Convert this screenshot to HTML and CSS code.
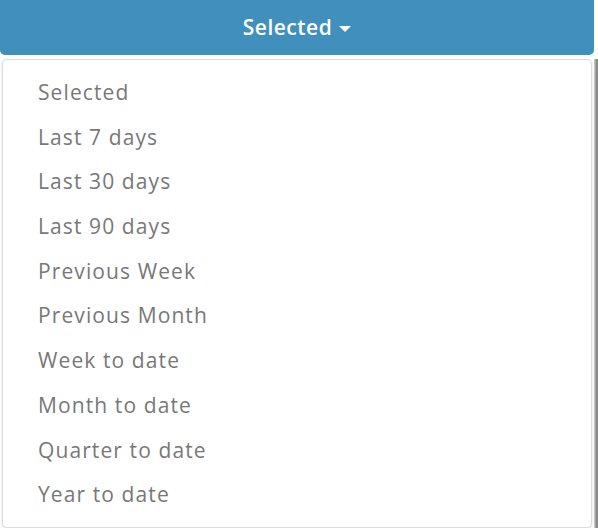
FILE: index.html
```html
<!DOCTYPE html>
<html>
<head>
<meta charset="utf-8">
<link rel="stylesheet" href="styles.css">
</head>
<body>
<div class="page">
  <div class="btn-row">
    <button class="toggle">Selected <span class="caret"></span></button>
  </div>
  <div class="menu-row">
    <ul class="menu">
      <li>Selected</li>
      <li>Last 7 days</li>
      <li>Last 30 days</li>
      <li>Last 90 days</li>
      <li>Previous Week</li>
      <li>Previous Month</li>
      <li>Week to date</li>
      <li>Month to date</li>
      <li>Quarter to date</li>
      <li>Year to date</li>
    </ul>
    <div class="edge"></div>
  </div>
</div>
</body>
</html>
```
FILE: styles.css
```css
html, body {
  margin: 0;
  padding: 0;
  background: #ffffff;
}
.page {
  width: 598px;
  height: 528px;
  display: flex;
  flex-direction: column;
  overflow: hidden;
  font-family: "Open Sans", Lato, sans-serif;
}
.btn-row {
  display: flex;
  padding-right: 4px;
}
.toggle {
  flex: 1;
  height: 55px;
  border: none;
  margin: 0;
  background: #418fbd;
  color: #ffffff;
  font-family: "Open Sans", sans-serif;
  font-size: 21px;
  font-weight: 600;
  letter-spacing: 0.5px;
  border-radius: 0 0 5px 5px;
  display: flex;
  align-items: center;
  justify-content: center;
  gap: 7px;
  padding: 0 0 2px 0;
}
.caret {
  width: 0;
  height: 0;
  border-left: 6px solid transparent;
  border-right: 6px solid transparent;
  border-top: 6px solid #ffffff;
  margin-top: 4px;
}
.menu-row {
  display: flex;
  margin-top: 4px;
  flex: 1;
  align-items: stretch;
}
.menu {
  list-style: none;
  margin: 0 0 3px 2px;
  padding: 10px 0 10px 0;
  width: 590px;
  box-sizing: border-box;
  border: 1px solid #dcdcdc;
  border-radius: 5px;
  background: #ffffff;
  box-shadow: 0 1px 3px rgba(0,0,0,0.12);
}
.menu li {
  height: 44.7px;
  line-height: 44.7px;
  padding-left: 35px;
  font-size: 21px;
  color: #787878;
  letter-spacing: 1.1px;
}
.edge {
  flex: 1;
  margin-left: 2px;
  background: linear-gradient(to right, #d6d6d6, #8a8a8a 60%, #8e8e8e);
}
```
